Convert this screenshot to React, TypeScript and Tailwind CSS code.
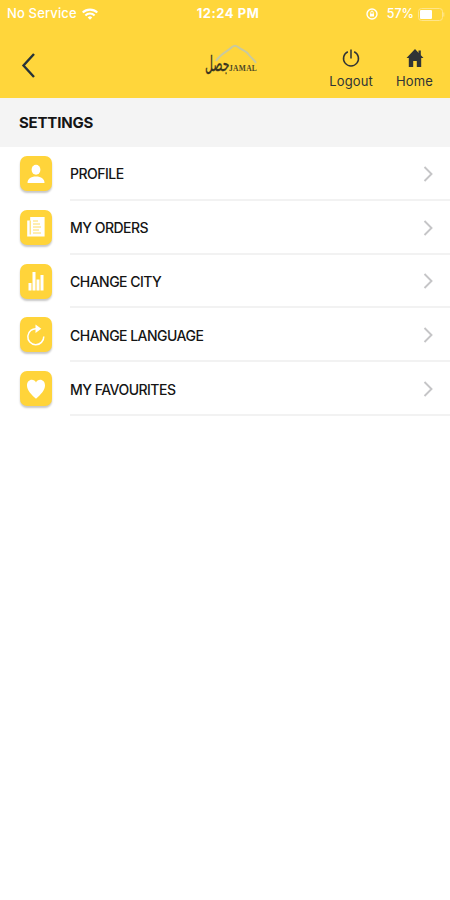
import type { ReactNode } from "react";

const PersonIcon = () => (
  <svg className="h-5 w-5" viewBox="0 0 20 20" fill="white">
    <ellipse cx="10" cy="5.7" rx="4.4" ry="5" />
    <path d="M1.500 19c0-4 3.200-6.500 8.500-6.500s8.500 2.500 8.500 6.500z" />
  </svg>
);

const OrdersIcon = () => (
  <svg className="h-5 w-5" viewBox="0 0 20 20">
    <path d="M1.2 3.500h3V0h14.400v19.600H1.200z" fill="white" />
    <path d="M4.200 3.500v14" stroke="#ffd43a" strokeWidth="0.9" />
    <path d="M7 4h5M7 7h7M7 10h8M7 13h6M7 16h8" stroke="#ffdc62" strokeWidth="1" />
  </svg>
);

const CityIcon = () => (
  <svg className="h-5 w-5" viewBox="0 0 20 20" fill="white">
    <path d="M2.500 12h3v7.500h-3zM6.500 1h3v18.500h-3zM10.500 8.500h3v11h-3zM14.500 4h3v15.500h-3z" />
  </svg>
);

const LanguageIcon = () => (
  <svg className="h-[22px] w-5" viewBox="0 0 20 22">
    <path d="M11 4.800A8 8 0 1 0 17.800 12.500" fill="none" stroke="white" strokeWidth="1.500" />
    <path d="M9.500 0.500l5.800 4.200-5.800 4.200z" fill="white" />
  </svg>
);

const HeartIcon = () => (
  <svg className="h-5 w-5" viewBox="0 0 20 20" fill="white">
    <path d="M10 19.800C5.500 15.600 1 11.500 1 6.500 1 3 3.200.8 5.800.8c1.900 0 3.500 1 4.200 2.700C10.700 1.800 12.300.8 14.200.8 16.800.8 19 3 19 6.500c0 5-4.500 9.100-9 13.300z" />
  </svg>
);

const items: { label: string; icon: ReactNode }[] = [
  { label: "PROFILE", icon: <PersonIcon /> },
  { label: "MY ORDERS", icon: <OrdersIcon /> },
  { label: "CHANGE CITY", icon: <CityIcon /> },
  { label: "CHANGE LANGUAGE", icon: <LanguageIcon /> },
  { label: "MY FAVOURITES", icon: <HeartIcon /> },
];

function StatusBar() {
  return (
    <div className="grid h-[28px] grid-cols-3 items-center pl-[7px] pr-[5px] text-white">
      <div className="flex items-center gap-[5px]">
        <span className="whitespace-nowrap text-[13px] font-medium tracking-[0.15px]">No Service</span>
        <svg className="h-[12px] w-[16px]" viewBox="0 0 15 11" fill="none" stroke="white" strokeWidth="2">
          <path d="M0.700 4.200a9.700 9.700 0 0 1 13.600 0M3.200 6.800a6.100 6.100 0 0 1 8.600 0" />
          <path d="M5.400 8.700a3 3 0 0 1 4.200 0l-2.100 2.200z" fill="white" stroke="none" />
        </svg>
      </div>
      <span className="pl-[4px] text-center text-[13px] font-bold tracking-[0.5px]">12:24 PM</span>
      <div className="flex items-center justify-end">
        <svg className="mr-[9px] h-3 w-3" viewBox="0 0 12 12" fill="none" stroke="white">
          <circle cx="6" cy="6" r="5" strokeWidth="1.400" />
          <path d="M4 5.800h4v2.700H4z" fill="white" stroke="none" />
          <path d="M4.800 6V4.300a1.200 1.200 0 0 1 2.400 0V6" strokeWidth="1" />
        </svg>
        <span className="mr-[4px] text-[12.5px] font-medium">57%</span>
        <svg className="h-[13px] w-[27px]" viewBox="0 0 27 13">
          <rect x="0.500" y="0.500" width="24" height="12" rx="3" fill="none" stroke="#ffe58a" />
          <rect x="2" y="2" width="12" height="9" rx="1" fill="white" />
          <path d="M25.800 4.500v4" stroke="#ffe58a" />
        </svg>
      </div>
    </div>
  );
}

function Logo() {
  return (
    <div className="relative h-[38px] w-[54px]">
      <svg className="absolute left-[10px] top-px" width="42" height="20" viewBox="0 0 42 20" fill="none">
        <path d="M1 17C6 9 12 8 17 3q3-2.500 6 0c5 4 8 3 11 8 3 4 5 4 7 8" stroke="#c9c99f" strokeWidth="2" />
      </svg>
      <span
        className="absolute left-0 top-[9px] origin-left scale-x-[0.52] whitespace-nowrap font-['DejaVu_Sans',sans-serif] text-[21px] leading-6 text-[#39351f] [-webkit-text-stroke:0.3px_#39351f]"
        lang="ar"
      >
        جصل
      </span>
      <span className="absolute left-[24px] top-[21px] font-['Liberation_Serif',serif] text-[7.5px] font-bold leading-[10px] tracking-[0.3px] text-[#4d4625]">
        JAMAL
      </span>
    </div>
  );
}

function Header() {
  return (
    <header className="h-[98px] bg-[#ffd63b]">
      <StatusBar />
      <div className="flex h-[70px] items-start pl-[21px] pr-[17px] text-[#303436]">
        <button className="mt-[25px]" aria-label="Back">
          <svg width="14" height="25" viewBox="0 0 14 25" fill="none" stroke="#263238" strokeWidth="2.400">
            <path d="M13 1L2.500 12.500 13 24" />
          </svg>
        </button>
        <div className="ml-[170px] mt-[15px]">
          <Logo />
        </div>
        <div className="ml-auto mt-[20px] flex gap-[23px] text-[13px] leading-4 tracking-[0.15px]">
          <button className="flex flex-col items-center">
            <svg className="mb-[5px]" width="18" height="20" viewBox="0 0 20 20" fill="none" stroke="#303436" strokeWidth="1.700">
              <path d="M10 0.500v10M6.500 3a8.300 8.300 0 1 0 7 0" />
            </svg>
            Logout
          </button>
          <button className="flex flex-col items-center">
            <svg className="mb-[5px] ml-[2px]" width="18" height="20" viewBox="0 0 18 20" fill="#303436">
              <path d="M9 1l8.500 9h-2.300v9h-4.400v-6H7.200v6H2.800v-9H.5z" />
              <path d="M12.500 2.500h2.300V7h-2.300z" />
            </svg>
            Home
          </button>
        </div>
      </div>
    </header>
  );
}

export default function App() {
  return (
    <div className="h-[900px] w-[450px] overflow-hidden bg-white font-['Inter',sans-serif]">
      <Header />
      <h1 className="flex h-[49px] items-center bg-[#f4f4f4] pl-[19px] pt-[2px] text-[15px] font-bold tracking-[-0.2px] text-[#151515]">
        SETTINGS
      </h1>
      <ul>
        {items.map((item) => (
          <li key={item.label} className="flex h-[53.8px] pl-5">
            <div className="mt-[9px] flex h-[35px] w-8 shrink-0 items-center justify-center rounded-[7px] bg-[#ffd43a] shadow-[0_2px_2px_rgba(0,0,0,0.22)]">
              {item.icon}
            </div>
            <div className="ml-[18px] flex flex-1 items-center justify-between border-b-2 border-[#f2f2f2] pr-[17px] pt-[2px]">
              <span className="text-[14px] font-medium tracking-[-0.52px] text-[#151515]">{item.label}</span>
              <svg width="10" height="16" viewBox="0 0 10 16" fill="none" stroke="#c5c5c7" strokeWidth="1.900">
                <path d="M1.500 1l7 7-7 7" />
              </svg>
            </div>
          </li>
        ))}
      </ul>
    </div>
  );
}
